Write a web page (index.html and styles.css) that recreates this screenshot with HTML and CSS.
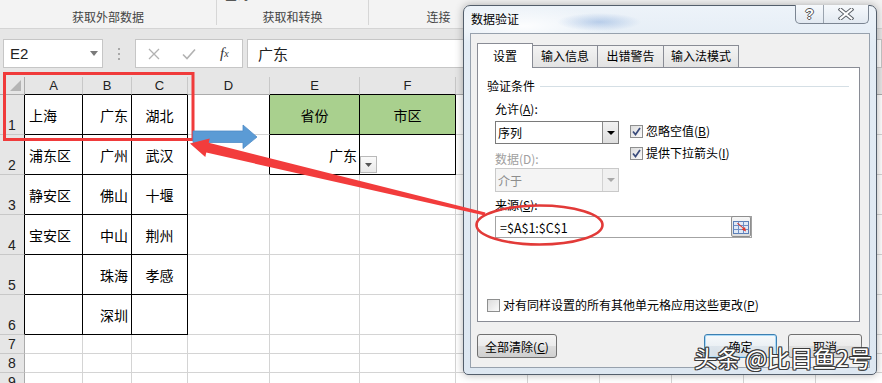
FILE: index.html
```html
<!DOCTYPE html>
<html lang="zh-CN">
<head>
<meta charset="utf-8">
<title>数据验证</title>
<link rel="stylesheet" href="styles.css">
</head>
<body>
<header class="ribbon">
  <div class="rgroup g1"><span class="glabel">获取外部数据</span></div>
  <div class="rgroup g2"><span class="peek">查询</span><span class="glabel">获取和转换</span></div>
  <div class="rgroup g3"><span class="glabel">连接</span></div>
</header>

<div class="fbar">
  <div class="namebox"><span>E2</span><svg class="caret" width="8" height="5" viewBox="0 0 8 5"><path d="M0 0H8L4 5Z" fill="#7a7a7a"/></svg></div>
  <div class="grip"><i></i><i></i><i></i></div>
  <div class="ficons">
    <span class="fi"><svg width="12" height="12" viewBox="0 0 12 12"><path d="M1 1L11 11M11 1L1 11" stroke="#b2b2b2" stroke-width="1.3"/></svg></span>
    <span class="fi"><svg width="14" height="12" viewBox="0 0 14 12"><path d="M1 6.5L5 10.5L13 1.5" stroke="#b2b2b2" stroke-width="1.6" fill="none"/></svg></span>
    <span class="fi fx">f<small>x</small></span>
  </div>
  <div class="finput">广东</div>
</div>

<div class="sheet">
  <div class="corner"><span class="tri"></span></div>
  <div class="ch bb">A</div><div class="ch bb">B</div><div class="ch bb">C</div><div class="ch">D</div><div class="ch bb">E</div><div class="ch bb">F</div><div class="ch">G</div><div class="ch">H</div><div class="ch">I</div><div class="ch">J</div><div class="ch">K</div><div class="ch">L</div>

  <div class="rh bl">1</div>
  <div class="c b">上海</div><div class="c b r">广东</div><div class="c b m">湖北</div><div class="c br"></div><div class="c b m g">省份</div><div class="c b m g">市区</div>
  <div class="c"></div><div class="c"></div><div class="c"></div><div class="c"></div><div class="c"></div><div class="c"></div>

  <div class="rh bl">2</div>
  <div class="c b">浦东区</div><div class="c b r">广州</div><div class="c b m">武汉</div><div class="c br"></div><div class="c b r e2">广东</div><div class="c b dd"><span class="ddbtn"><svg width="7" height="4" viewBox="0 0 7 4"><path d="M0 0H7L3.5 4Z" fill="#555"/></svg></span></div>
  <div class="c"></div><div class="c"></div><div class="c"></div><div class="c"></div><div class="c"></div><div class="c"></div>

  <div class="rh bl">3</div>
  <div class="c b">静安区</div><div class="c b r">佛山</div><div class="c b m">十堰</div><div class="c"></div><div class="c"></div><div class="c"></div>
  <div class="c"></div><div class="c"></div><div class="c"></div><div class="c"></div><div class="c"></div><div class="c"></div>

  <div class="rh bl">4</div>
  <div class="c b">宝安区</div><div class="c b r">中山</div><div class="c b m">荆州</div><div class="c"></div><div class="c"></div><div class="c"></div>
  <div class="c"></div><div class="c"></div><div class="c"></div><div class="c"></div><div class="c"></div><div class="c"></div>

  <div class="rh bl">5</div>
  <div class="c b"></div><div class="c b r">珠海</div><div class="c b m">孝感</div><div class="c"></div><div class="c"></div><div class="c"></div>
  <div class="c"></div><div class="c"></div><div class="c"></div><div class="c"></div><div class="c"></div><div class="c"></div>

  <div class="rh bl">6</div>
  <div class="c b"></div><div class="c b r">深圳</div><div class="c b m"></div><div class="c"></div><div class="c"></div><div class="c"></div>
  <div class="c"></div><div class="c"></div><div class="c"></div><div class="c"></div><div class="c"></div><div class="c"></div>

  <div class="rh sm">7</div>
  <div class="c"></div><div class="c"></div><div class="c"></div><div class="c"></div><div class="c"></div><div class="c"></div>
  <div class="c"></div><div class="c"></div><div class="c"></div><div class="c"></div><div class="c"></div><div class="c"></div>

  <div class="rh sm">8</div>
  <div class="c"></div><div class="c"></div><div class="c"></div><div class="c"></div><div class="c"></div><div class="c"></div>
  <div class="c"></div><div class="c"></div><div class="c"></div><div class="c"></div><div class="c"></div><div class="c"></div>

  <div class="rh sm">9</div>
  <div class="c"></div><div class="c"></div><div class="c"></div><div class="c"></div><div class="c"></div><div class="c"></div>
  <div class="c"></div><div class="c"></div><div class="c"></div><div class="c"></div><div class="c"></div><div class="c"></div>
</div>

<div class="dialog">
  <div class="titlebar">
    <span class="title">数据验证</span>
    <div class="caps">
      <span class="cap help">?</span>
      <span class="cap close"><svg width="16" height="12" viewBox="0 0 16 12"><path d="M2.5 1.5L13.5 10.5M13.5 1.5L2.5 10.5" stroke="#5a5f66" stroke-width="4" stroke-linecap="square"/><path d="M2.5 1.5L13.5 10.5M13.5 1.5L2.5 10.5" stroke="#fff" stroke-width="2" stroke-linecap="square"/></svg></span>
    </div>
  </div>
  <div class="inner">
    <div class="tabs">
      <span class="tab active">设置</span>
      <span class="tab t2">输入信息</span>
      <span class="tab t3">出错警告</span>
      <span class="tab t4">输入法模式</span>
    </div>
    <div class="pane">
      <div class="legend"><span>验证条件</span><i class="rule"></i></div>
      <div class="form">
        <div class="col-left">
          <div class="lbl l1">允许(<u>A</u>):</div>
          <div class="select"><span class="val">序列</span><span class="drop"><svg width="8" height="4" viewBox="0 0 8 4"><path d="M0 0H8L4 4Z" fill="#000"/></svg></span></div>
          <div class="lbl l2 dis">数据(D):</div>
          <div class="select disabled"><span class="val">介于</span><span class="drop"><svg width="8" height="4" viewBox="0 0 8 4"><path d="M0 0H8L4 4Z" fill="#a8a8a8"/></svg></span></div>
        </div>
        <div class="col-right">
          <label class="chk c1"><span class="box"><svg width="11" height="11" viewBox="0 0 11 11"><path d="M2 5.5L4.5 8.5L9 2" stroke="#3a4c7c" stroke-width="1.7" fill="none"/></svg></span>忽略空值(<u>B</u>)</label>
          <label class="chk c2"><span class="box"><svg width="11" height="11" viewBox="0 0 11 11"><path d="M2 5.5L4.5 8.5L9 2" stroke="#3a4c7c" stroke-width="1.7" fill="none"/></svg></span>提供下拉箭头(<u>I</u>)</label>
        </div>
      </div>
      <div class="lbl l3">来源(<u>S</u>):</div>
      <div class="source"><span class="val">=$A$1:$C$1</span>
        <span class="refbtn"><svg width="16" height="16" viewBox="0 0 16 16">
          <rect x="0.5" y="2.5" width="15" height="12" fill="#dfe9f7" stroke="#5b7fb7"/>
          <path d="M0.5 6.5H15.5M0.5 10.5H15.5M5.5 2.5V14.5M10.5 2.5V14.5" stroke="#6f8fc4"/>
          <path d="M4 4.5L10 9.5L8.5 10.5L13 12.5L12 8L10.8 9L5 4Z" fill="#e2382c"/>
        </svg></span>
      </div>
      <label class="chk c3"><span class="box"></span>对有同样设置的所有其他单元格应用这些更改(<u>P</u>)</label>
    </div>
    <div class="buttons">
      <span class="btn clear">全部清除(<u>C</u>)</span>
      <span class="btn ok">确定</span>
      <span class="btn cancel">取消</span>
    </div>
  </div>
</div>

<svg class="marks" width="882" height="383" viewBox="0 0 882 383">
  <rect x="4.5" y="73.5" width="188.5" height="66" fill="none" stroke="#f03b3b" stroke-width="3"/>
  <polygon points="193,131 243,131 243,125 257,137 243,148.5 243,142.5 193,142.5" fill="#5b9bd5" stroke="#4f8cc6" stroke-width="0.8"/>
  <polygon points="190,143.5 209.7,138.5 208.7,142.8 485.4,212.5 484.6,215.5 206.3,152.6 205.3,156.9" fill="#f23c3c"/>
  <ellipse cx="539.5" cy="225" rx="63" ry="19.5" fill="none" stroke="#e23a38" stroke-width="2.6"/>
</svg>

<div class="watermark">头条 @比目鱼2号</div>
</body>
</html>
```

FILE: styles.css
```css
* { box-sizing: border-box; }
html, body { margin: 0; padding: 0; }
body {
  width: 882px;
  height: 383px;
  overflow: hidden;
  position: relative;
  background: #fff;
  color: #000;
  font-family: "Noto Sans CJK SC", "Liberation Sans", sans-serif;
}

/* ribbon */
.ribbon {
  display: flex;
  height: 29px;
  background: #f3f3f3;
  border-bottom: 1px solid #d4d4d4;
}
.rgroup {
  position: relative;
  height: 25px;
  display: flex;
  align-items: flex-end;
  justify-content: center;
  border-right: 1px solid #d6d6d6;
  font-size: 12px;
  line-height: 16px;
  color: #444;
}
.g1 { width: 217px; }
.g2 { width: 152px; }
.g3 { width: 139px; border-right: none; }
.peek {
  position: absolute;
  left: 8px;
  top: -13px;
  font-size: 12px;
  color: #333;
}

/* formula bar */
.fbar {
  height: 48px;
  background: #e6e6e6;
  display: flex;
  align-items: flex-start;
  padding: 10px 0 0 3px;
}
.namebox {
  width: 100px;
  height: 29px;
  background: #fff;
  border: 1px solid #c6c6c6;
  display: flex;
  align-items: center;
  justify-content: space-between;
  padding: 0 4px 0 6px;
  font-family: "Liberation Sans", sans-serif;
  font-size: 15px;
  color: #222;
}
.grip {
  width: 32px;
  height: 29px;
  display: flex;
  flex-direction: column;
  align-items: center;
  justify-content: center;
  gap: 3px;
}
.grip i { width: 2px; height: 2px; background: #a8a8a8; }
.ficons {
  width: 108px;
  height: 29px;
  background: #fff;
  border: 1px solid #c6c6c6;
  display: flex;
  align-items: center;
}
.fi { width: 36px; display: flex; justify-content: center; align-items: center; }
.fx {
  font-family: "Liberation Serif", serif;
  font-style: italic;
  font-size: 15px;
  color: #333;
  line-height: 1;
}
.fx small { font-size: 10px; }
.finput {
  flex: 1;
  height: 29px;
  margin-left: 4px;
  background: #fff;
  border: 1px solid #c6c6c6;
  padding-left: 10px;
  display: flex;
  align-items: center;
  font-size: 15px;
  color: #222;
}

/* sheet */
.sheet {
  display: grid;
  grid-template-columns: 25px 58px 49px 56px 82px 90px 96px repeat(6, 72px);
  grid-template-rows: 18px repeat(6, 40px) repeat(3, 19px);
}
.sheet > div {
  border-right: 1px solid #d4d4d4;
  border-bottom: 1px solid #d4d4d4;
}
.corner { background: #e6e6e6; position: relative; border-color: #ababab !important; }
.tri {
  position: absolute;
  right: 3px;
  bottom: 3px;
  width: 0; height: 0;
  border-left: 11px solid transparent;
  border-bottom: 11px solid #b5b5b5;
}
.ch {
  background: #e6e6e6;
  display: flex;
  align-items: center;
  justify-content: center;
  font-family: "Liberation Sans", sans-serif;
  font-size: 13px;
  color: #222;
  border-bottom-color: #ababab !important;
  border-right-color: #c8c8c8 !important;
}
.rh {
  background: #e6e6e6;
  display: flex;
  align-items: flex-end;
  justify-content: center;
  padding-bottom: 1px;
  font-family: "Liberation Sans", sans-serif;
  font-size: 14px;
  line-height: 16px;
  color: #222;
  border-right-color: #ababab !important;
  border-bottom-color: #c8c8c8 !important;
}
.rh.sm { padding-bottom: 0; line-height: 17px; }
.c {
  display: flex;
  align-items: center;
  font-size: 14px;
  padding-left: 4px;
  position: relative;
}
.c.r { justify-content: flex-end; padding-left: 0; padding-right: 3px; }
.c.m { justify-content: center; padding-left: 0; }
.c.e2 { padding-right: 2px; }
.sheet > .b { border-right-color: #000; border-bottom-color: #000; }
.sheet > .br { border-right-color: #000; }
.sheet > .bb { border-bottom-color: #000 !important; }
.sheet > .bl { border-right-color: #000 !important; }
.g { background: #a9d08e; }
.ddbtn {
  position: absolute;
  left: 0;
  top: 21px;
  width: 17px;
  height: 17px;
  border: 1px solid #b9b9b9;
  background: linear-gradient(#fafafa, #e9e9e9);
  display: flex;
  align-items: center;
  justify-content: center;
}

/* dialog */
.dialog {
  position: absolute;
  left: 463px;
  top: 5px;
  width: 414px;
  height: 370px;
  border: 1px solid #535e6b;
  border-radius: 7px 7px 5px 5px;
  padding: 0 6px 6px;
  display: flex;
  flex-direction: column;
  background:
    radial-gradient(ellipse 42px 9px at 135px 16px, rgba(120, 160, 215, 0.45), rgba(120, 160, 215, 0) 100%),
    radial-gradient(ellipse 90px 20px at 60px 20px, rgba(255, 255, 255, 0.9), rgba(255, 255, 255, 0) 100%),
    linear-gradient(180deg, #edf3f9 0, #e3ecf5 40px, #dde7f1 100%);
  box-shadow: 0 0 8px rgba(0, 0, 0, 0.3);
}
.titlebar {
  height: 27px;
  display: flex;
  justify-content: space-between;
  align-items: flex-start;
}
.title {
  margin: 5px 0 0 1px;
  font-size: 12px;
  line-height: 16px;
  color: #000;
}
.caps {
  margin-top: -1px;
  margin-right: 1px;
  height: 19px;
  display: flex;
  border: 1px solid #7b8592;
  border-top: none;
  border-radius: 0 0 5px 5px;
  background: linear-gradient(#f6f9fc, #e2e9f1);
  overflow: hidden;
}
.cap { display: flex; align-items: center; justify-content: center; }
.help {
  width: 28px;
  border-right: 1px solid #9aa3ae;
  font-family: "Liberation Sans", sans-serif;
  font-weight: bold;
  font-size: 14px;
  color: #fff;
  text-shadow: 1px 0 #555, -1px 0 #555, 0 1px #555, 0 -1px #555;
}
.close { width: 44px; }

.inner {
  flex: 1;
  border: 1px solid #97a1ad;
  background: #f0f0f0;
  padding: 9px 9px 0 6px;
  display: flex;
  flex-direction: column;
}
.tabs {
  display: flex;
  align-items: flex-end;
  height: 25px;
  margin-bottom: -1px;
}
.tab {
  height: 22px;
  margin-bottom: 1px;
  border: 1px solid #898c95;
  border-bottom: none;
  background: linear-gradient(#f3f3f3, #e3e3e3);
  font-size: 12px;
  line-height: 20px;
  display: flex;
  justify-content: center;
  margin-left: -1px;
}
.tab.active {
  position: relative;
  height: 25px;
  margin-bottom: 0;
  margin-left: 0;
  width: 56px;
  background: #fff;
  line-height: 24px;
}
.t2 { width: 66px; }
.t3 { width: 67px; }
.t4 { width: 76px; }

.pane {
  height: 255px;
  border: 1px solid #898c95;
  background: #fff;
  padding: 0 10px 0 9px;
  display: flex;
  flex-direction: column;
  font-size: 12px;
}
.legend {
  margin-top: 10px;
  height: 16px;
  line-height: 16px;
  display: flex;
  align-items: center;
}
.rule { flex: 1; height: 1px; background: #d5dfe5; margin-left: 5px; }
.form { display: flex; margin-left: 8px; }
.col-left { width: 124px; display: flex; flex-direction: column; }
.col-right { margin-left: 11px; display: flex; flex-direction: column; }
.lbl { height: 16px; line-height: 16px; }
.l1 { margin-top: 7px; }
.l2 { margin-top: 7px; }
.l3 { margin-top: 5px; margin-left: 8px; }
.dis { color: #a0a0a0; }
.select {
  margin-top: 4px;
  height: 23px;
  border: 1px solid #7a7a7a;
  background: #fff;
  display: flex;
  align-items: center;
  justify-content: space-between;
}
.select .val { padding-left: 2px; }
.select .drop {
  width: 16px;
  height: 100%;
  border-left: 1px solid #8a8a8a;
  background: linear-gradient(#f2f2f2, #dedede);
  display: flex;
  align-items: center;
  justify-content: center;
}
.select.disabled {
  margin-top: 1px;
  height: 24px;
  border-color: #c9c9c9;
  background: #f4f4f4;
  color: #8d8d8d;
}
.select.disabled .drop { border-left-color: #d2d2d2; background: #f0f0f0; }

.chk {
  height: 16px;
  display: flex;
  align-items: center;
  line-height: 16px;
}
.c1 { margin-top: 29px; }
.c2 { margin-top: 6px; }
.box {
  width: 13px;
  height: 13px;
  margin-right: 3px;
  border: 1px solid #8e8f8f;
  background: linear-gradient(135deg, #dcdcdc, #fbfbfb);
  display: flex;
  align-items: center;
  justify-content: center;
}
.box svg { display: block; }
.source {
  margin: 3px 0 0 8px;
  width: 257px;
  height: 22px;
  border: 1px solid #a3a3a3;
  display: flex;
  align-items: center;
  justify-content: space-between;
}
.source .val { padding-left: 4px; font-size: 12.5px; }
.refbtn {
  width: 20px;
  height: 21px;
  margin-top: -1px;
  border: 1px solid #8f8f8f;
  border-radius: 2px;
  background: linear-gradient(#f7f7f7, #dcdcdc);
  display: flex;
  align-items: center;
  justify-content: center;
}
.c3 { margin-top: auto; margin-bottom: 8px; }

.buttons {
  margin-top: 12px;
  margin-right: -2px;
  display: flex;
  font-size: 12px;
}
.btn {
  height: 24px;
  border: 1px solid #707070;
  border-radius: 3px;
  background: linear-gradient(#f4f4f4 0, #ebebeb 50%, #dddddd 51%, #cfcfcf 100%);
  display: flex;
  align-items: center;
  justify-content: center;
}
.clear { width: 80px; }
.ok {
  width: 73px;
  margin-left: auto;
  border-color: #3c7fb1;
  box-shadow: inset 0 0 0 1px #a8d8f6;
  background: linear-gradient(#f6f9fb 0, #ebf0f4 50%, #dde5ec 51%, #d3dde6 100%);
}
.cancel { width: 74px; margin-left: 11px; }

/* annotations over the screenshot */
.marks {
  position: absolute;
  left: 0;
  top: 0;
  pointer-events: none;
}
.watermark {
  position: absolute;
  left: 694px;
  top: 342px;
  font-size: 23px;
  line-height: 30px;
  color: #fff;
  white-space: nowrap;
  text-shadow:
    1px 0 #3a3a3a, -1px 0 #3a3a3a, 0 1px #3a3a3a, 0 -1px #3a3a3a,
    1px 1px #3a3a3a, -1px -1px #3a3a3a, 1px -1px #3a3a3a, -1px 1px #3a3a3a,
    0 0 6px rgba(255, 255, 255, 0.8);
}
```
